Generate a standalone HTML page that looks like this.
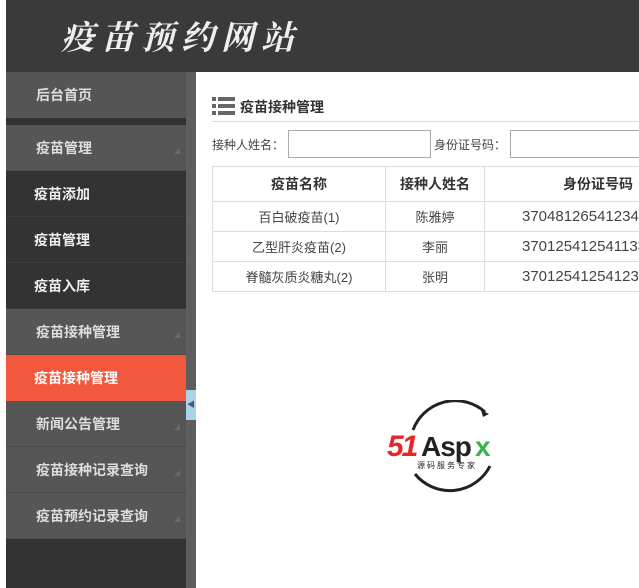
<!DOCTYPE html><html><head><meta charset="utf-8"><style>
*{margin:0;padding:0;box-sizing:border-box}
body{width:639px;height:588px;overflow:hidden;background:#fff;font-family:"Liberation Sans","Noto Sans CJK SC",sans-serif;position:relative}
.hd{position:absolute;left:6px;top:0;width:633px;height:72px;background:#3a3a3a}
.hd span{position:absolute;left:55px;top:12px;font-family:"Noto Serif CJK SC",serif;font-size:33px;color:#eee;letter-spacing:7px;font-weight:bold;font-style:italic}
.sb{position:absolute;left:6px;top:72px;width:180px;height:516px;background:#333}
.gut{position:absolute;left:186px;top:72px;width:10px;height:516px;background:#5e5e5e}
.tog{position:absolute;left:186px;top:390px;width:10px;height:30px;background:#a9d3e6;font-size:8px;color:#556;line-height:30px;text-align:center}
.it{position:absolute;left:0;width:180px;height:46px;line-height:46px;font-size:14px;font-weight:bold;color:#eee;padding-left:30px}
.g{background:#565656;color:#ddd;border-bottom:1px solid #4a4a4a}
.g::after{content:"";position:absolute;right:6px;bottom:16px;border:3px solid transparent;border-right-color:#6a6a6a;border-bottom-color:#6a6a6a}
.h::after{display:none}
.d{background:#333;padding-left:28px;border-bottom:1px solid #3d3d3d}
.a{background:#f2583e;color:#fff;padding-left:28px}
.ct{position:absolute;left:212px;top:97px;font-size:14px;font-weight:bold;color:#333}
.ln{position:absolute;left:212px;top:121px;width:427px;height:1px;background:#ddd}
.lab{position:absolute;font-size:12px;color:#444;top:136px}
.inp{position:absolute;top:130px;height:28px;border:1px solid #aaa;background:#fff}
.tw{position:absolute;left:212px;top:166px;width:427px;height:130px;overflow:hidden}
table{border-collapse:collapse;font-size:13px;color:#444;table-layout:fixed;width:480px}
td,th{border:1px solid #ddd;text-align:center;height:30px;white-space:nowrap;overflow:hidden}
th{height:35px;font-weight:bold;color:#333;font-size:14px}
.n{text-align:left;padding-left:37px;font-size:15px}
</style></head><body>
<div class="hd"><span>疫苗预约网站</span></div>
<div class="sb">
<div class="it g h" style="top:0;background:#555;border:0">后台首页</div>
<div class="it g" style="top:53px">疫苗管理</div>
<div class="it d" style="top:99px">疫苗添加</div>
<div class="it d" style="top:145px">疫苗管理</div>
<div class="it d" style="top:191px">疫苗入库</div>
<div class="it g" style="top:237px">疫苗接种管理</div>
<div class="it a" style="top:283px">疫苗接种管理</div>
<div class="it g" style="top:329px">新闻公告管理</div>
<div class="it g" style="top:375px">疫苗接种记录查询</div>
<div class="it g" style="top:421px">疫苗预约记录查询</div>
</div>
<div class="gut"></div><div class="tog">◀</div>
<svg style="position:absolute;left:212px;top:97px" width="23" height="18"><g fill="#666"><rect x="0" y="0" width="4" height="4"/><rect x="6" y="0" width="17" height="4"/><rect x="0" y="7" width="4" height="4"/><rect x="6" y="7" width="17" height="4"/><rect x="0" y="14" width="4" height="4"/><rect x="6" y="14" width="17" height="4"/></g></svg>
<div class="ct" style="left:240px">疫苗接种管理</div>
<div class="ln"></div>
<div class="lab" style="left:212px">接种人姓名：</div>
<div class="inp" style="left:288px;width:143px"></div>
<div class="lab" style="left:434px">身份证号码：</div>
<div class="inp" style="left:510px;width:140px"></div>
<div class="tw"><table>
<colgroup><col style="width:173px"><col style="width:99px"><col style="width:208px"></colgroup>
<tr><th>疫苗名称</th><th>接种人姓名</th><th style="text-align:left;padding-left:78px">身份证号码</th></tr>
<tr><td>百白破疫苗(1)</td><td>陈雅婷</td><td class="n">370481265412345</td></tr>
<tr><td>乙型肝炎疫苗(2)</td><td>李丽</td><td class="n">370125412541133</td></tr>
<tr><td>脊髓灰质炎糖丸(2)</td><td>张明</td><td class="n">370125412541236</td></tr>
</table></div>
<svg style="position:absolute;left:385px;top:400px" width="130" height="95">
<path d="M28 30 A45 45 0 0 1 100 12" fill="none" stroke="#222" stroke-width="3"/>
<path d="M104 14 l-8 -4 l2 7z" fill="#222"/>
<path d="M105 66 A45 45 0 0 1 30 74" fill="none" stroke="#222" stroke-width="3"/>
<text x="2" y="56" font-family="Liberation Sans" font-weight="bold" font-style="italic" font-size="30" fill="#e8262a" letter-spacing="-2">51</text>
<text x="36" y="56" font-family="Liberation Sans" font-weight="bold" font-size="28" fill="#222" letter-spacing="-1">Asp</text>
<text x="90" y="56" font-family="Liberation Sans" font-weight="bold" font-size="28" fill="#3ab34a">x</text>
<text x="32" y="68" font-size="8" fill="#222" font-family="Noto Sans CJK SC,sans-serif" letter-spacing="2">源码服务专家</text>
</svg>
</body></html>
